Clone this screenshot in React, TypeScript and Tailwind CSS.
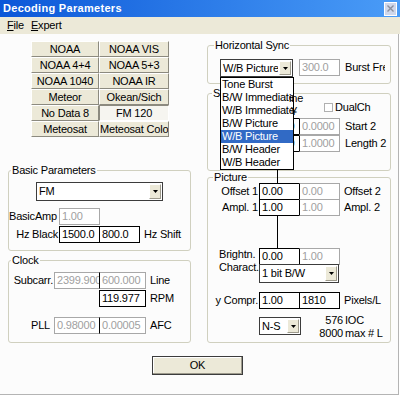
import React from 'react';

const presets: { label: string; pressed?: boolean }[] = [
  { label: 'NOAA' },
  { label: 'NOAA VIS' },
  { label: 'NOAA 4+4' },
  { label: 'NOAA 5+3' },
  { label: 'NOAA 1040' },
  { label: 'NOAA IR' },
  { label: 'Meteor' },
  { label: 'Okean/Sich' },
  { label: 'No Data 8' },
  { label: 'FM 120', pressed: true },
  { label: 'Meteosat' },
  { label: 'Meteosat Color' },
];

const syncModes = ['Tone Burst', 'B/W Immediate', 'W/B Immediate', 'B/W Picture', 'W/B Picture', 'B/W Header', 'W/B Header'];

const PresetButton: React.FC<{ label: string; pressed?: boolean }> = ({ label, pressed }) => (
  <div
    className={`overflow-hidden whitespace-nowrap border text-center leading-[14px] ${
      pressed
        ? 'border-t-[#8c8a7f] border-l-[#8c8a7f] border-b-white border-r-white bg-[#f6f5f0]'
        : 'border-t-white border-l-white border-b-[#8c8a7f] border-r-[#8c8a7f] bg-[#ece9d8]'
    }`}
  >
    {label}
  </div>
);

const Box: React.FC<{ value: string; disabled?: boolean; second?: boolean; className?: string }> = ({
  value,
  disabled,
  second,
  className = 'w-[41px]',
}) => (
  <div
    className={`relative z-10 h-[17px] shrink-0 overflow-hidden whitespace-nowrap border bg-white pl-[2px] leading-[15px] ${
      disabled ? 'border-[#a8a8a8] text-[#a0a0a0]' : 'border-black text-black'
    } ${second ? '-ml-[1px] border-l-black' : ''} ${className}`}
  >
    {value}
  </div>
);

const Combo: React.FC<{ value: string; size: string }> = ({ value, size }) => (
  <div className={`relative z-10 flex shrink-0 border border-[#3c3c3c] bg-white ${size}`}>
    <span className="flex-1 overflow-hidden whitespace-nowrap pl-[2px] leading-[16px]">{value}</span>
    <span className="m-[1px] flex w-[12px] items-center justify-center border border-t-white border-l-white border-b-[#9d9a8c] border-r-[#9d9a8c] bg-[#ece9d8]">
      <svg width="5" height="3" viewBox="0 0 5 3">
        <path d="M0 0h5L2.5 3z" fill="#000" />
      </svg>
    </span>
  </div>
);

const Group: React.FC<{ title: string; titleClass: string; className: string; children: React.ReactNode }> = ({
  title,
  titleClass,
  className,
  children,
}) => (
  <div className={`rounded-[3px] border border-[#d0d0bf] ${className}`}>
    <div className={`-mt-[7px] w-fit bg-[#fcfcfc] px-[1px] leading-[13px] ${titleClass}`}>{title}</div>
    {children}
  </div>
);

export default function App() {
  return (
    <div className="h-[396px] w-[400px] overflow-hidden bg-white font-['Liberation_Sans',Arial,sans-serif] text-[11px] tracking-[-0.2px] text-black">
      {/* title bar */}
      <div className="flex h-[17px] items-center bg-linear-to-r from-[#0b57d8] to-[#4a9cf7] pl-[3px] pr-[3px]">
        <span className="font-bold tracking-[0.3px] text-white">Decoding Parameters</span>
        <span className="ml-auto flex h-[14px] w-[13px] items-center justify-center border border-white bg-[#cfd7ea]">
          <svg width="7" height="7" viewBox="0 0 7 7">
            <path d="M0.5 0.5l6 6M6.5 0.5l-6 6" stroke="#8a8f9c" strokeWidth="1.4" />
          </svg>
        </span>
      </div>

      {/* menu */}
      <div className="flex h-[17px] items-center bg-[#ece9d8] pl-[7px]">
        <span>
          <u>F</u>ile
        </span>
        <span className="ml-[7px]">
          <u>E</u>xpert
        </span>
      </div>

      <div className="relative h-[361px] w-[399px] border-r border-b border-[#b4b4b4] bg-[#fcfcfc]">
        <div className="flex">
          {/* left column */}
          <div className="ml-[8px] w-[183px]">
            <div className="ml-[23px] mt-[7px] grid w-[138px] auto-rows-[16px] grid-cols-[68px_70px]">
              {presets.map(p => (
                <PresetButton key={p.label} label={p.label} pressed={p.pressed} />
              ))}
            </div>

            <Group title="Basic Parameters" titleClass="ml-[2px]" className="mt-[33px] h-[81px]">
              <Combo value="FM" size="ml-[27px] mt-[5px] h-[19px] w-[127px]" />
              <div className="mt-[7px] flex">
                <span className="w-[50px] shrink-0 pr-[3px] text-right leading-[17px]">BasicAmp</span>
                <Box value="1.00" disabled />
              </div>
              <div className="mt-[1px] flex">
                <span className="w-[50px] shrink-0 pr-[1px] text-right leading-[17px]">Hz Black</span>
                <Box value="1500.0" />
                <Box value="800.0" second />
                <span className="ml-[4px] leading-[17px]">Hz Shift</span>
              </div>
            </Group>

            <Group title="Clock" titleClass="ml-[2px]" className="mt-[9px] h-[83px]">
              <div className="mt-[5px] flex">
                <span className="w-[45px] shrink-0 pr-[1px] text-right leading-[17px]">Subcarr.</span>
                <Box value="2399.900" disabled className="w-[46px]" />
                <Box value="600.000" disabled second className="w-[47px]" />
                <span className="ml-[4px] leading-[17px]">Line</span>
              </div>
              <div className="mt-[1px] flex pl-[90px]">
                <Box value="119.977" className="w-[47px]" />
                <span className="ml-[4px] leading-[17px]">RPM</span>
              </div>
              <div className="mt-[10px] flex">
                <span className="w-[45px] shrink-0 pr-[4px] text-right leading-[17px]">PLL</span>
                <Box value="0.98000" disabled className="w-[46px]" />
                <Box value="0.00005" disabled second className="w-[47px]" />
                <span className="ml-[4px] leading-[17px]">AFC</span>
              </div>
            </Group>
          </div>

          {/* right column */}
          <div className="ml-[16px] w-[184px]">
            <Group title="Horizontal Sync" titleClass="ml-[6px]" className="mt-[11px] h-[39px]">
              <div className="mt-[7px] flex items-start">
                <Combo value="W/B Picture" size="ml-[12px] h-[18px] w-[73px]" />
                <Box value="300.0" disabled className="ml-[6px] w-[41px]" />
                <span className="ml-[5px] w-[40px] overflow-hidden whitespace-nowrap leading-[17px]">Burst Freq</span>
              </div>
            </Group>

            <Group title="Sync" titleClass="ml-[4px]" className="mt-[9px] h-[78px]">
              <div className="mt-[1px] flex h-[13px] items-center pl-[116px]">
                <span className="h-[9px] w-[9px] border border-[#b0b0b0] bg-white" />
                <span className="ml-[2px] leading-[13px]">DualCh</span>
              </div>
              <div className="mt-[4px] flex">
                <span className="w-[51px] shrink-0" />
                <Box value="0.0000" />
                <Box value="0.0000" disabled second />
                <span className="ml-[5px] leading-[17px]">Start 2</span>
              </div>
              <div className="flex">
                <span className="w-[51px] shrink-0" />
                <Box value="1.0000" />
                <Box value="1.0000" disabled second />
                <span className="ml-[5px] leading-[17px]">Length 2</span>
              </div>
            </Group>

            <Group title="Picture" titleClass="ml-[5px]" className="mt-[6px] h-[166px]">
              <div className="-mt-[1px] flex">
                <span className="w-[51px] shrink-0 pr-[1px] text-right leading-[17px]">Offset 1</span>
                <Box value="0.00" />
                <Box value="0.00" disabled second />
                <span className="ml-[4px] leading-[17px]">Offset 2</span>
              </div>
              <div className="-mt-[1px] flex">
                <span className="w-[51px] shrink-0 pr-[1px] text-right leading-[17px]">Ampl. 1</span>
                <Box value="1.00" />
                <Box value="1.00" disabled second />
                <span className="ml-[4px] leading-[17px]">Ampl. 2</span>
              </div>
              <div className="mt-[32px] flex">
                <span className="w-[51px] shrink-0 pl-[11px] leading-[13px]">
                  Brightn.
                  <br />
                  Charact.
                </span>
                <div>
                  <div className="flex">
                    <Box value="0.00" />
                    <Box value="1.00" disabled second />
                  </div>
                  <Combo value="1 bit B/W" size="-mt-[1px] h-[19px] w-[80px]" />
                </div>
              </div>
              <div className="mt-[9px] flex">
                <span className="w-[51px] shrink-0 pr-[1px] text-right leading-[17px]">y Compr.</span>
                <Box value="1.00" />
                <Box value="1810" second />
                <span className="ml-[4px] leading-[17px]">Pixels/L</span>
              </div>
              <div className="mt-[8px] flex items-start">
                <span className="w-[51px] shrink-0" />
                <Combo value="N-S" size="h-[18px] w-[42px]" />
                <div className="-mt-[3px] leading-[13px]">
                  <div className="flex">
                    <span className="w-[42px] text-right">576</span>
                    <span className="ml-[2px]">IOC</span>
                  </div>
                  <div className="flex">
                    <span className="w-[42px] text-right">8000</span>
                    <span className="ml-[2px]">max # L</span>
                  </div>
                </div>
              </div>
            </Group>
          </div>
        </div>

        <div className="ml-[152px] mt-[13px] flex h-[19px] w-[91px] items-center justify-center border border-[#3c3c3c] bg-[#ece9d8] shadow-[inset_-1px_-1px_0_#9d9a8c,inset_1px_1px_0_#ffffff]">
          OK
        </div>

        {/* stray line left under the open list */}
        <div className="absolute left-[277px] top-[135px] z-[5] h-[79px] w-[1px] bg-black" />

        {/* open drop-down list */}
        <div className="absolute left-[220px] top-[43px] z-20 w-[74px] border border-black bg-white">
          {syncModes.map(m => (
            <div
              key={m}
              className={`h-[13px] overflow-hidden whitespace-nowrap pl-[1px] leading-[13px] ${
                m === 'W/B Picture' ? 'bg-[#316ac5] text-white' : ''
              }`}
            >
              {m}
            </div>
          ))}
        </div>
        <span className="absolute left-[289px] top-[58px] z-30 leading-[13px]">ine</span>
        <span className="absolute left-[291px] top-[71px] z-30 leading-[13px]">¥</span>
      </div>
    </div>
  );
}
